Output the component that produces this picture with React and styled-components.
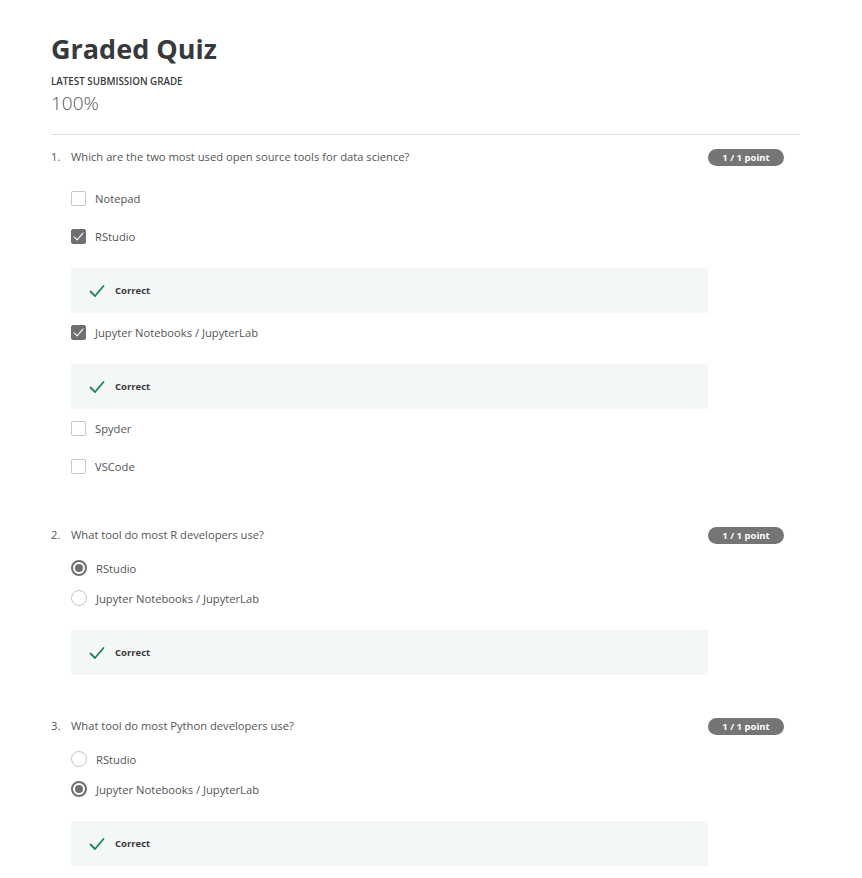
import React from 'react';
import styled, { createGlobalStyle } from 'styled-components';

const GlobalStyle = createGlobalStyle`
  body {
    margin: 0;
    background: #fff;
    font-family: "Open Sans", "Noto Sans", Arial, sans-serif;
    color: #373a3c;
  }
`;

const quiz = [
  {
    type: 'checkbox',
    text: 'Which are the two most used open source tools for data science?',
    options: [
      { label: 'Notepad' },
      { label: 'RStudio', checked: true, correct: true },
      { label: 'Jupyter Notebooks / JupyterLab', checked: true, correct: true },
      { label: 'Spyder' },
      { label: 'VSCode' },
    ],
  },
  {
    type: 'radio',
    text: 'What tool do most R developers use?',
    options: [
      { label: 'RStudio', checked: true },
      { label: 'Jupyter Notebooks / JupyterLab' },
    ],
    feedback: true,
  },
  {
    type: 'radio',
    text: 'What tool do most Python developers use?',
    options: [
      { label: 'RStudio' },
      { label: 'Jupyter Notebooks / JupyterLab', checked: true },
    ],
    feedback: true,
  },
];

function CheckMark({ size = 16, color = '#1f8354', stroke = 1.8 }) {
  return (
    <svg width={size} height={size} viewBox="0 0 16 16" fill="none">
      <path d="M1.5 8.5 L6 13 L14.5 3" stroke={color} strokeWidth={stroke} strokeLinecap="round" strokeLinejoin="round" />
    </svg>
  );
}

function Feedback({ inline }) {
  return (
    <FeedbackBox $inline={inline}>
      <CheckMark />
      <span>Correct</span>
    </FeedbackBox>
  );
}

function Question({ index, q }) {
  return (
    <QuestionBlock $type={q.type}>
      <QuestionRow>
        <Num>{index}.</Num>
        <QText>{q.text}</QText>
        <Badge>1 / 1 point</Badge>
      </QuestionRow>
      <Options $type={q.type}>
        {q.options.map((o, i) => (
          <React.Fragment key={i}>
            <Option $type={q.type}>
              {q.type === 'checkbox' ? (
                <Box $checked={o.checked}>
                  {o.checked && <CheckMark size={11} color="#fff" stroke={1.6} />}
                </Box>
              ) : (
                <Radio $checked={o.checked} />
              )}
              <span>{o.label}</span>
            </Option>
            {o.correct && <Feedback inline />}
          </React.Fragment>
        ))}
      </Options>
      {q.feedback && <Feedback />}
    </QuestionBlock>
  );
}

export default function App() {
  return (
    <Page>
      <GlobalStyle />
      <Title>Graded Quiz</Title>
      <GradeLabel>LATEST SUBMISSION GRADE</GradeLabel>
      <Grade>100%</Grade>
      <Divider />
      {quiz.map((q, i) => (
        <Question key={i} index={i + 1} q={q} />
      ))}
    </Page>
  );
}

const Page = styled.div`
  width: 749px;
  padding: 30px 0 20px 51px;
`;

const Title = styled.h1`
  margin: 0;
  font-size: 27px;
  line-height: 38px;
  font-weight: 700;
  color: #373a3c;
`;

const GradeLabel = styled.div`
  margin-top: 8px;
  font-size: 9.8px;
  font-weight: 600;
  color: #373a3c;
  line-height: 12px;
`;

const Grade = styled.div`
  font-size: 19px;
  line-height: 24px;
  font-weight: 300;
  color: #555;
  margin-top: 3px;
`;

const Divider = styled.hr`
  border: 0;
  border-top: 1px solid #e1e1e1;
  margin: 19px 0 0;
`;

const QuestionBlock = styled.section`
  padding-top: 14px;
  padding-bottom: ${(p) => (p.$type === 'checkbox' ? '28px' : '29px')};
  &:last-child {
    padding-bottom: 10px;
  }
`;

const QuestionRow = styled.div`
  display: flex;
  align-items: flex-start;
  padding-right: 16px;
  font-size: 11.2px;
  line-height: 16px;
  color: #555;
`;

const Num = styled.span`
  width: 20px;
  flex: none;
`;

const QText = styled.span`
  flex: 1;
`;

const Badge = styled.span`
  flex: none;
  width: 76px;
  height: 17px;
  border-radius: 9px;
  background: #757575;
  color: #fff;
  font-size: 9.5px;
  font-weight: 700;
  line-height: 17px;
  text-align: center;
`;

const Options = styled.div`
  display: flex;
  flex-direction: column;
  margin-top: ${(p) => (p.$type === 'checkbox' ? '13px' : '9px')};
  margin-left: 20px;
`;

const Option = styled.label`
  display: flex;
  align-items: center;
  gap: 9px;
  height: ${(p) => (p.$type === 'checkbox' ? '38px' : '30px')};
  font-size: 11.2px;
  color: #555;
`;

const Box = styled.span`
  width: 15px;
  height: 15px;
  box-sizing: border-box;
  border-radius: 2px;
  display: flex;
  align-items: center;
  justify-content: center;
  background: ${(p) => (p.$checked ? '#6f6f6f' : '#fff')};
  border: 1px solid ${(p) => (p.$checked ? '#6f6f6f' : '#c6c6c6')};
`;

const Radio = styled.span`
  width: 16px;
  height: 16px;
  box-sizing: border-box;
  border-radius: 50%;
  border: ${(p) => (p.$checked ? '2px solid #6f6f6f' : '1px solid #c6c6c6')};
  display: flex;
  align-items: center;
  justify-content: center;
  &::after {
    content: '';
    display: ${(p) => (p.$checked ? 'block' : 'none')};
    width: 8px;
    height: 8px;
    border-radius: 50%;
    background: #6f6f6f;
  }
`;

const FeedbackBox = styled.div`
  display: flex;
  align-items: center;
  gap: 10px;
  width: 637px;
  height: 45px;
  box-sizing: border-box;
  padding-left: 18px;
  margin: ${(p) => (p.$inline ? '13px 0 0 0' : '17px 0 0 20px')};
  background: #f3f8f6;
  font-size: 9.5px;
  font-weight: 700;
  color: #373a3c;
`;
